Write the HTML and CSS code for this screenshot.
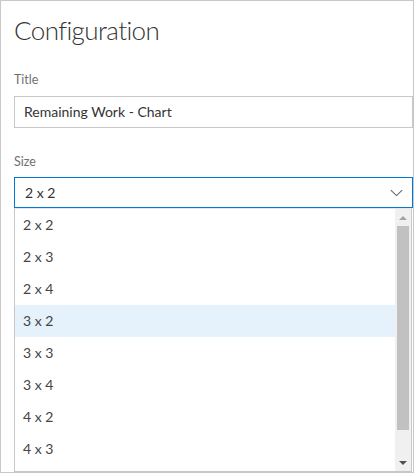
FILE: index.html
```html
<!DOCTYPE html>
<html>
<head>
<meta charset="utf-8">
<link rel="stylesheet" href="styles.css">
</head>
<body>
<div class="frame">
  <h1 class="heading">Configuration</h1>
  <label class="label label-title">Title</label>
  <div class="input">Remaining Work - Chart</div>
  <label class="label label-size">Size</label>
  <div class="select">
    <span class="select-value">2 x 2</span>
    <svg class="chevron" width="13" height="8" viewBox="0 0 13 8"><path d="M0.8 1.2 L6.5 6.6 L12.2 1.2" fill="none" stroke="#666" stroke-width="1.1"/></svg>
  </div>
  <div class="listbox">
    <ul class="options">
      <li class="option">2 x 2</li>
      <li class="option">2 x 3</li>
      <li class="option">2 x 4</li>
      <li class="option option-hover">3 x 2</li>
      <li class="option">3 x 3</li>
      <li class="option">3 x 4</li>
      <li class="option">4 x 2</li>
      <li class="option">4 x 3</li>
    </ul>
    <div class="scrollbar">
      <div class="scroll-btn"><svg width="8" height="4" viewBox="0 0 8 4"><path d="M0 4 L4 0 L8 4 Z" fill="#a3a3a3"/></svg></div>
      <div class="scroll-track"><div class="scroll-thumb"></div></div>
      <div class="scroll-btn"><svg width="8" height="4" viewBox="0 0 8 4"><path d="M0 0 L8 0 L4 4 Z" fill="#505050"/></svg></div>
    </div>
  </div>
</div>
</body>
</html>
```
FILE: styles.css
```css
* { box-sizing: border-box; }
html, body { margin: 0; padding: 0; background: #fff; }
body { font-family: "Lato", "Open Sans", sans-serif; color: #333; }

.frame {
  width: 414px;
  height: 473px;
  border: 1px solid #c8c8c8;
  padding: 10px 0 0 13px;
  overflow: hidden;
  display: flex;
  flex-direction: column;
}

.heading {
  margin: 0;
  font-size: 26px;
  font-weight: 300;
  letter-spacing: -0.6px;
  line-height: 38px;
  color: #333;
}

.label {
  display: block;
  font-size: 12.5px;
  line-height: 16px;
  color: #707070;
}
.label-title { margin-top: 23px; }
.label-size { margin-top: 26px; }

.input {
  margin-top: 8px;
  width: 399px;
  height: 32px;
  border: 1px solid #c8c8c8;
  padding: 0 9px;
  font-size: 14px;
  line-height: 30px;
  color: #333;
}

.select {
  margin-top: 7px;
  width: 399px;
  height: 32px;
  border: 1px solid #0078d4;
  padding: 0 9px 0 10px;
  display: flex;
  align-items: center;
  justify-content: space-between;
  font-size: 14px;
  color: #333;
}
.chevron { display: block; }

.listbox {
  width: 398px;
  flex: none;
  height: 264px;
  border: 1px solid #c8c8c8;
  border-top-color: #e6e6e6;
  display: flex;
}

.options {
  list-style: none;
  margin: 0;
  padding: 0;
  flex: 1;
  overflow: hidden;
}
.option {
  height: 32px;
  line-height: 32px;
  padding-left: 8px;
  font-size: 14px;
  color: #444;
}
.option-hover { background: #e5f1fb; }

.scrollbar {
  width: 16px;
  background: #f0f0f0;
  display: flex;
  flex-direction: column;
}
.scroll-btn {
  height: 17px;
  display: flex;
  align-items: center;
  justify-content: center;
  flex: none;
}
.scroll-btn svg { display: block; }
.scroll-track { flex: 1; }
.scroll-thumb {
  margin: 0 2px;
  height: 204px;
  background: #c1c1c1;
}
```
